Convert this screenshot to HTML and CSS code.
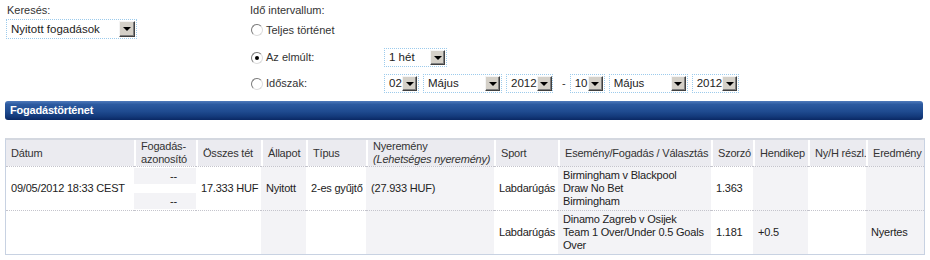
FILE: index.html
```html
<!DOCTYPE html>
<html lang="hu">
<head>
    <meta charset="UTF-8">
    <title>Fogadástörténet</title>
    <link rel="stylesheet" href="styles.css">
</head>
<body>
    <div class="filters">
        <div class="search">
            <div class="label">Keresés:</div>
            <div class="sel sel-search"><span>Nyitott fogadások</span><span class="btn"></span></div>
        </div>
        <div class="interval">
            <div class="label">Idő intervallum:</div>
            <div class="iv-row first">
                <label class="opt"><span class="radio"></span>Teljes történet</label>
            </div>
            <div class="iv-row">
                <label class="opt"><span class="radio checked"></span>Az elmúlt:</label>
                <div class="sel sel-week"><span>1 hét</span><span class="btn"></span></div>
            </div>
            <div class="iv-row">
                <label class="opt"><span class="radio"></span>Időszak:</label>
                <div class="sel sel-day"><span>02</span><span class="btn"></span></div>
                <div class="sel sel-month"><span>Május</span><span class="btn"></span></div>
                <div class="sel sel-year"><span>2012</span><span class="btn"></span></div>
                <span class="dash">-</span>
                <div class="sel sel-day"><span>10</span><span class="btn"></span></div>
                <div class="sel sel-month"><span>Május</span><span class="btn"></span></div>
                <div class="sel sel-year"><span>2012</span><span class="btn"></span></div>
            </div>
        </div>
    </div>

    <div class="bar">Fogadástörténet</div>

    <table class="history">
        <colgroup>
            <col style="width:128px"><col style="width:62px"><col style="width:65px"><col style="width:45px">
            <col style="width:60px"><col style="width:128px"><col style="width:64px"><col style="width:153px">
            <col style="width:42px"><col style="width:55px"><col style="width:58px"><col style="width:58px">
        </colgroup>
        <thead>
            <tr>
                <th>Dátum</th>
                <th>Fogadás-<br>azonosító</th>
                <th>Összes tét</th>
                <th>Állapot</th>
                <th>Típus</th>
                <th>Nyeremény<br><i>(Lehetséges nyeremény)</i></th>
                <th>Sport</th>
                <th>Esemény/Fogadás / Választás</th>
                <th>Szorzó</th>
                <th>Hendikep</th>
                <th>Ny/H részl.</th>
                <th>Eredmény</th>
            </tr>
        </thead>
        <tbody>
            <tr>
                <td>09/05/2012 18:33 CEST</td>
                <td class="ids"><div class="sub">--</div><div class="sub">--</div></td>
                <td>17.333 HUF</td>
                <td class="alt">Nyitott</td>
                <td>2-es gyűjtő</td>
                <td class="alt">(27.933 HUF)</td>
                <td>Labdarúgás</td>
                <td class="alt">Birmingham v Blackpool<br>Draw No Bet<br>Birmingham</td>
                <td>1.363</td>
                <td class="alt"></td>
                <td></td>
                <td class="alt"></td>
            </tr>
            <tr>
                <td></td>
                <td></td>
                <td></td>
                <td class="alt"></td>
                <td></td>
                <td class="alt"></td>
                <td>Labdarúgás</td>
                <td class="alt">Dinamo Zagreb v Osijek<br>Team 1 Over/Under 0.5 Goals<br>Over</td>
                <td>1.181</td>
                <td class="alt">+0.5</td>
                <td></td>
                <td class="alt">Nyertes</td>
            </tr>
        </tbody>
    </table>
</body>
</html>
```

FILE: styles.css
```css
body {
    margin: 0;
    padding: 4px 5px 0 5px;
    font-family: "Liberation Sans", Arial, sans-serif;
    font-size: 11px;
    line-height: 13px;
    color: #222;
    background-color: #fff;
}

.filters {
    display: flex;
    height: 97px;
}

.search {
    width: 244px;
    padding-left: 1px;
}

.search .label {
    padding-left: 1px;
    margin-bottom: 2px;
}

.label {
    color: #333;
}

.interval .iv-row {
    display: flex;
    align-items: center;
    gap: 4px;
    height: 19px;
    margin-top: 8px;
}

.interval .iv-row.first {
    margin-top: 3px;
    height: 20px;
}

.interval .iv-row:last-child {
    margin-top: 7px;
}

.opt {
    display: flex;
    align-items: center;
    width: 130px;
    color: #333;
}

.radio {
    width: 12px;
    height: 12px;
    box-sizing: border-box;
    border-radius: 50%;
    border: 1px solid;
    border-color: #7a7a7a #dcdcdc #dcdcdc #7a7a7a;
    background-color: #fff;
    margin: 0 3px 0 1px;
    position: relative;
}

.radio.checked::after {
    content: "";
    position: absolute;
    left: 3px;
    top: 3px;
    width: 4px;
    height: 4px;
    border-radius: 50%;
    background-color: #000;
}

.sel {
    display: flex;
    align-items: center;
    justify-content: space-between;
    box-sizing: border-box;
    height: 19px;
    border: 1px dotted #9ccbec;
    padding: 0 1px 0 4px;
    background-color: #fff;
    color: #222;
    font-size: 11.5px;
}

.sel-search {
    width: 131px;
    height: 20px;
}

.sel-week { width: 63px; }
.sel-day { width: 35px; }
.sel-month { width: 79px; }
.sel-year { width: 47px; }

.btn {
    width: 15px;
    height: 15px;
    box-sizing: border-box;
    background-color: #d4d0c8;
    border: 1px solid;
    border-color: #f4f4f4 #404040 #404040 #f4f4f4;
    box-shadow: inset -1px -1px 0 #808080;
    position: relative;
    flex-shrink: 0;
}

.sel-search .btn {
    width: 16px;
    height: 16px;
}

.btn::after {
    content: "";
    position: absolute;
    left: 50%;
    top: 50%;
    margin: -2px 0 0 -4px;
    border-left: 4px solid transparent;
    border-right: 4px solid transparent;
    border-top: 4px solid #000;
}

.dash {
    margin-left: 5px;
    color: #333;
}

.bar {
    height: 19px;
    box-sizing: border-box;
    padding: 3px 5px 0 5px;
    margin-right: 2px;
    border-radius: 3px;
    background: linear-gradient(#4f7abb 0%, #2c5aa0 18%, #1f4b90 55%, #143b7c 80%, #0a2864 100%);
    color: #fff;
    font-weight: bold;
    letter-spacing: -0.2px;
}

.history {
    margin-top: 18px;
    width: 918px;
    table-layout: fixed;
    border-collapse: separate;
    border-spacing: 0;
    border: 1px solid #c8d2e2;
    border-top: 2px solid #d4d8e0;
    letter-spacing: -0.2px;
}

.history th {
    height: 26px;
    padding: 0 0 0 5px;
    background-color: #ebebf0;
    border-left: 2px solid #fff;
    text-align: left;
    font-weight: normal;
    color: #333;
    white-space: nowrap;
    overflow: hidden;
}

.history th:first-child {
    border-left: 0;
}

.history th i {
    color: #333;
}

.history td {
    padding: 2px 0 2px 5px;
    border-top: 1px dotted #c4c4cc;
    vertical-align: middle;
    white-space: nowrap;
    overflow: hidden;
}

.history td.alt {
    background-color: #f3f3f6;
}

.history td.ids {
    padding: 1px 0;
}

.ids .sub {
    height: 16px;
    line-height: 16px;
    background-color: #f3f3f6;
    text-align: right;
    padding-right: 19px;
}

.ids .sub + .sub {
    margin-top: 9px;
}
```
